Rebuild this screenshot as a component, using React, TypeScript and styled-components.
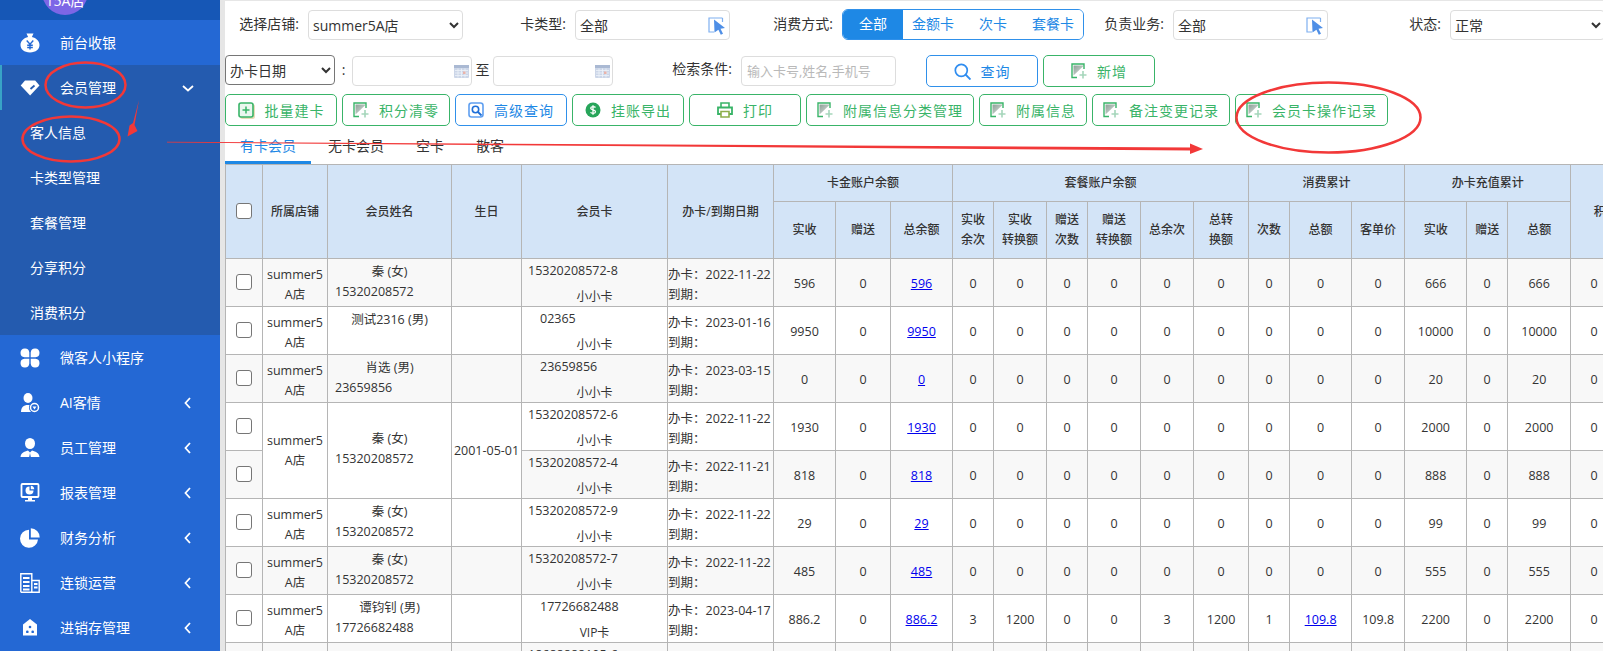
import React from "react";
import styled, { createGlobalStyle } from "styled-components";

const FONT = `"Open Sans", "Noto Sans CJK SC", sans-serif`;
const GREEN = "#39b468";
const BLUE = "#1e88e5";

const Global = createGlobalStyle`
  html, body { margin: 0; padding: 0; width: 1603px; height: 651px; overflow: hidden; background: #fff; }
  body { font-family: ${FONT}; font-size: 14px; color: #333; }
  * { box-sizing: border-box; }
`;

const Page = styled.div`
  position: relative;
  display: flex;
  width: 1603px;
  height: 651px;
  overflow: hidden;
`;

/* ---------- sidebar ---------- */
const Sidebar = styled.aside`
  flex: 0 0 220px;
  width: 220px;
  height: 651px;
  background: #2468d4;
  overflow: hidden;
  color: #fff;
`;
const SideTop = styled.div`
  height: 20px;
  background: #1657b6;
  display: flex;
  align-items: flex-end;
  padding-left: 42px;
  overflow: hidden;
`;
const Avatar = styled.div`
  flex: 0 0 46px;
  height: 46px;
  margin-bottom: 5px;
  border-radius: 50%;
  background: #7d66e6;
  display: flex;
  align-items: flex-end;
  justify-content: center;
  padding-bottom: 5px;
  font-size: 14px;
  line-height: 18px;
`;
const TopName = styled.span`
  margin: 0 0 18px 62px;
  font-size: 14px;
  line-height: 14px;
  height: 14px;
`;
const NavGroup = styled.div`
  background: #245baf;
`;
const NavRow = styled.div<{ $open?: boolean }>`
  height: 45px;
  display: flex;
  align-items: center;
  padding-left: ${(p) => (p.$open ? 18 : 20)}px;
  border-left: ${(p) => (p.$open ? "2px solid #38a3c6" : "none")};
`;
const NavIcon = styled.span`
  flex: 0 0 20px;
  width: 20px;
  height: 20px;
  display: block;
  svg { display: block; }
`;
const NavLabel = styled.span`
  margin-left: 20px;
  flex: 0 0 122px;
  padding-bottom: 2px;
  white-space: nowrap;
`;
const NavChevron = styled.span`
  display: block;
  width: 12px;
  height: 12px;
  svg { display: block; }
`;
const SubRow = styled.div`
  height: 45px;
  padding-left: 30px;
  line-height: 45px;
  white-space: nowrap;
`;

/* ---------- main ---------- */
const Main = styled.main`
  flex: 1 1 auto;
  min-width: 0;
  background: #e6e6e6;
  padding: 1px 0 0 5px;
  overflow: hidden;
`;
const Panel = styled.div`
  background: #fff;
  width: 1378px;
  height: 650px;
  overflow: hidden;
`;
const Row = styled.div<{ $top: number }>`
  display: flex;
  align-items: flex-start;
  margin-top: ${(p) => p.$top}px;
  height: 32px;
  white-space: nowrap;
`;
const Label = styled.label<{ $w: number }>`
  flex: 0 0 ${(p) => p.$w}px;
  width: ${(p) => p.$w}px;
  padding-right: 9px;
  text-align: right;
  height: 30px;
  line-height: 28px;
  color: #333;
`;
const Select = styled.select<{ $w: number; $dark?: boolean }>`
  flex: 0 0 ${(p) => p.$w}px;
  width: ${(p) => p.$w}px;
  height: 30px;
  border: 1px solid ${(p) => (p.$dark ? "#767676" : "#ddd")};
  border-radius: 4px;
  background: #fff;
  font: 14px ${FONT};
  color: #333;
  padding: 0;
  outline: none;
`;
const PickBox = styled.div`
  flex: 0 0 155px;
  width: 155px;
  height: 30px;
  border: 1px solid #ddd;
  border-radius: 4px;
  display: flex;
  align-items: center;
  justify-content: space-between;
  padding: 0 2px 0 4px;
  color: #333;
`;
const Seg = styled.div`
  flex: 0 0 242px;
  height: 31px;
  margin-top: -1px;
  display: flex;
  border: 1px solid #2f90ea;
  border-radius: 6px;
  overflow: hidden;
`;
const SegItem = styled.div<{ $on?: boolean }>`
  flex: 0 0 60px;
  text-align: center;
  line-height: 28px;
  color: ${(p) => (p.$on ? "#fff" : BLUE)};
  background: ${(p) => (p.$on ? BLUE : "#fff")};
`;
const Joiner = styled.span<{ $w: number }>`
  flex: 0 0 ${(p) => p.$w}px;
  text-align: center;
  line-height: 28px;
  height: 30px;
  margin-top: 1px;
`;
const DateBox = styled.div`
  flex: 0 0 120px;
  height: 30px;
  margin-top: 1px;
  border: 1px solid #ddd;
  border-radius: 4px;
  display: flex;
  align-items: center;
  justify-content: flex-end;
  padding-right: 2px;
`;
const SearchInput = styled.input`
  flex: 0 0 155px;
  width: 155px;
  height: 30px;
  margin-top: 1px;
  border: 1px solid #ddd;
  border-radius: 4px;
  padding: 0 5px;
  font: 13px ${FONT};
  outline: none;
  &::placeholder { color: #b9b9b9; }
`;
const Btn = styled.button<{ $w: number; $blue?: boolean; $ml?: number }>`
  flex: 0 0 ${(p) => p.$w}px;
  width: ${(p) => p.$w}px;
  height: 32px;
  margin-left: ${(p) => p.$ml ?? 0}px;
  display: flex;
  align-items: center;
  justify-content: center;
  gap: 10px;
  padding: 0;
  background: #fff;
  border: 1px solid ${(p) => (p.$blue ? "#2f90ea" : GREEN)};
  border-radius: 5px;
  color: ${(p) => (p.$blue ? BLUE : GREEN)};
  font: 14px ${FONT};
  letter-spacing: 1px;
  svg { display: block; flex: none; }
`;
const BtnRow = styled.div`
  display: flex;
  gap: 5px;
  margin-top: 7px;
  height: 32px;
`;
const Tabs = styled.div`
  display: flex;
  gap: 2px;
  margin-top: 5px;
  height: 33px;
`;
const Tab = styled.div<{ $on?: boolean }>`
  height: 33px;
  padding: 0 15px;
  line-height: 30px;
  border-bottom: 3px solid ${(p) => (p.$on ? BLUE : "transparent")};
  color: ${(p) => (p.$on ? BLUE : "#333")};
  white-space: nowrap;
`;

/* ---------- table ---------- */
const Table = styled.table`
  border-collapse: collapse;
  table-layout: fixed;
  width: 1439px;
  font-size: 12.5px;
  line-height: 20px;
  color: #333;
  td, th { border: 1px solid #b5b5b5; padding: 0; text-align: center; overflow: hidden; }
  th { background: #d3e4f7; font-weight: 500; font-size: 12px; color: #333; }
  tbody tr:nth-child(odd) td { background: #f8f8f8; }
  tbody tr:nth-child(even) td { background: #fff; }
  tbody td.span { background: #fff; }
`;
const HeadOne = styled.tr`
  height: 37px;
`;
const HeadTwo = styled.tr`
  height: 57px;
`;
const BodyRow = styled.tr`
  height: 48px;
`;
const Check = styled.input`
  appearance: none;
  display: block;
  width: 16px;
  height: 16px;
  margin: 0 auto 2px;
  background: #fff;
  border: 1px solid #767676;
  border-radius: 3px;
`;
const TopCell = styled.td`
  vertical-align: top;
`;
const StoreText = styled.div<{ $top: number }>`
  padding-top: ${(p) => p.$top}px;
  white-space: nowrap;
`;
const NameLine = styled.div`
  height: 20px;
  white-space: nowrap;
`;
const Phone = styled.div`
  height: 20px;
  padding-left: 7px;
  text-align: left;
`;
const NameBox = styled.div<{ $top?: number; $bottom?: number }>`
  padding-top: ${(p) => p.$top ?? 0}px;
  padding-bottom: ${(p) => p.$bottom ?? 0}px;
`;
const CardNo = styled.div<{ $pad: number }>`
  padding: 2px 0 0 ${(p) => p.$pad}px;
  text-align: left;
  height: 22px;
  white-space: nowrap;
`;
const CardKind = styled.div`
  margin-top: 8px;
  height: 16px;
  line-height: 16px;
  font-size: 12px;
`;
const DateText = styled.div`
  padding: 6px 0 0 0;
  text-align: left;
  white-space: nowrap;
`;
const Num = styled.div`
  padding-top: 2px;
`;
const Link = styled.a`
  color: #0000ee;
  text-decoration: underline;
  cursor: pointer;
`;
const Overlay = styled.svg`
  position: absolute;
  left: 0;
  top: 0;
  pointer-events: none;
`;

/* ---------- icons ---------- */
const W = { fill: "#fff" };
const BG = "#2468d4";

const BagIcon = () => (
  <svg width="20" height="20" viewBox="0 0 20 20">
    <path {...W} d="M6.5 0.5h7l-1.6 3.6c4.4 1 7.6 4 7.6 8 0 4.4-3.6 7.4-9.500 7.400S.5 16.500.5 12.100c0-4 3.200-7 7.600-8z" />
    <path d="M6.700 7.500L10 11.200l3.300-3.700M10 11.200v5.300M7.200 12.200h5.600M7.200 14.500h5.600" stroke={BG} strokeWidth="1.400" fill="none" />
  </svg>
);
const DiamondIcon = () => (
  <svg width="20" height="20" viewBox="0 0 20 20">
    <path {...W} d="M5 2.500h10.200l4.300 5-9.400 10L.7 7.500z" />
    <path d="M10.500 11l4-3.500" stroke="#245baf" strokeWidth="1.800" />
  </svg>
);
const CloverIcon = () => (
  <svg width="20" height="20" viewBox="0 0 20 20">
    <path {...W} d="M9.300 9.300H4.500a4.400 4.400 0 1 1 4.800-4.800z" />
    <path {...W} d="M10.700 9.300h4.800a4.400 4.400 0 1 0-4.800-4.800z" />
    <path {...W} d="M9.300 10.700H4.500a4.400 4.400 0 1 0 4.800 4.800z" />
    <path {...W} d="M10.700 10.700h4.800a4.400 4.400 0 1 1-4.800 4.800z" />
  </svg>
);
const AiIcon = () => (
  <svg width="20" height="20" viewBox="0 0 20 20">
    <ellipse {...W} cx="8" cy="5" rx="4.500" ry="5" />
    <path {...W} d="M1 19c0-4.500 2.500-7 7-7s7 2.500 7 7z" />
    <circle cx="14.500" cy="14.500" r="5.500" fill={BG} />
    <circle cx="14.500" cy="14.500" r="4" fill="none" stroke="#fff" strokeWidth="1.500" />
    <path {...W} d="M12.500 13.500h4l-2 3z" />
  </svg>
);
const StaffIcon = () => (
  <svg width="20" height="20" viewBox="0 0 20 20">
    <ellipse {...W} cx="10" cy="5.500" rx="5" ry="5.500" />
    <path {...W} d="M.5 19c.3-3.600 3.500-5.500 7.500-6.500l2 2 2-2c4 1 7.200 2.900 7.500 6.500z" />
    <path d="M10 15l-.8 4h1.600z" fill={BG} />
  </svg>
);
const MonitorIcon = () => (
  <svg width="20" height="20" viewBox="0 0 20 20">
    <rect x="1.500" y="1" width="17" height="13" rx="1" fill="none" stroke="#fff" strokeWidth="1.800" />
    <path {...W} d="M9.500 3.500v4h4a4 4 0 1 1-4-4z" />
    <path {...W} d="M10.800 2.800a4 4 0 0 1 3.500 3.500h-3.500zM8 15h4v2h3v1.500H5V17h3z" />
  </svg>
);
const PieIcon = () => (
  <svg width="20" height="20" viewBox="0 0 20 20">
    <path {...W} d="M9 1.800v9.700h9A9 9 0 1 1 9 1.800z" />
    <path {...W} d="M10.800.300A9 9 0 0 1 19.700 9.500h-8.900z" />
  </svg>
);
const BuildingIcon = () => (
  <svg width="20" height="20" viewBox="0 0 20 20">
    <path d="M.8 19.300V.8h11v18.500M11.800 7.500h7.400v11.800H.8" fill="none" stroke="#fff" strokeWidth="1.400" />
    <path d="M3 5h6.500M3 9h6.500M3 13h6.500M3 16.500h6.500M14 11h3.500M14 14.500h3.500" stroke="#fff" strokeWidth="2.200" />
  </svg>
);
const HouseIcon = () => (
  <svg width="20" height="20" viewBox="0 0 20 20">
    <path {...W} d="M10 1L3 6.500 3 17.500h14V6.500z" />
    <circle cx="10" cy="9" r="1.300" fill={BG} />
    <rect x="6" y="12.500" width="2.600" height="2.600" rx="1.200" fill={BG} />
    <rect x="11.400" y="12.500" width="2.600" height="2.600" rx="1.200" fill={BG} />
  </svg>
);
const ChevDown = () => (
  <svg width="12" height="12" viewBox="0 0 12 12">
    <path d="M1 4l5 4.500L11 4" fill="none" stroke="#fff" strokeWidth="1.800" />
  </svg>
);
const ChevLeft = () => (
  <svg width="12" height="12" viewBox="0 0 12 12">
    <path d="M8 1L3.500 6 8 11" fill="none" stroke="#fff" strokeWidth="1.800" />
  </svg>
);
const CursorIcon = () => (
  <svg width="20" height="20" viewBox="0 0 20 20">
    <path d="M15.500 3H2v14h5" fill="none" stroke="#7fb0f0" strokeWidth="1.200" />
    <path d="M15.500 3v4" fill="none" stroke="#7fb0f0" strokeWidth="1.200" />
    <path d="M7 4.500l11 8.500-4.500.8 2.500 5-2.200 1-2.400-5-3.900 2.700z" fill="#4f8fe6" />
  </svg>
);
const CalendarIcon = () => (
  <svg width="15" height="13" viewBox="0 0 15 13">
    <rect x="0" y="0" width="15" height="13" rx="1" fill="#ccd6e8" />
    <rect x="0" y="0" width="15" height="3" fill="#aab9d3" />
    <path d="M1 5.500h13M1 8h13M1 10.500h13M4 3.500v9M7.500 3.500v9M11 3.500v9" stroke="#eef2f9" strokeWidth=".8" />
    <rect x="9" y="6.500" width="2.500" height="2.500" fill="#eab3aa" />
  </svg>
);
const DocPlusIcon = () => (
  <svg width="16" height="16" viewBox="0 0 16 16">
    <defs>
      <linearGradient id="dp" x1="0" y1="0" x2="1" y2="1">
        <stop offset="0" stopColor="#8f9f98" />
        <stop offset="1" stopColor="#dfe6e2" />
      </linearGradient>
    </defs>
    <path d="M2.500 2.500h10.500L2.500 12.500z" fill="url(#dp)" />
    <path d="M6 14.500H1V1h12v5" fill="none" stroke={GREEN} strokeWidth="1.400" />
    <path d="M12 8v7.500M8.500 12h7" stroke="#a5d6bb" strokeWidth="1.600" />
  </svg>
);
const BatchIcon = () => (
  <svg width="17" height="17" viewBox="0 0 17 17">
    <rect x="2" y="2" width="15" height="15" rx="2.500" fill="#e8dcb8" />
    <rect x="1" y="1" width="14" height="14" rx="2" fill="#eaf7ef" stroke={GREEN} strokeWidth="1.600" />
    <path d="M8 4.500v7M4.500 8h7" stroke={GREEN} strokeWidth="1.500" />
  </svg>
);
const QueryBoxIcon = () => (
  <svg width="16" height="16" viewBox="0 0 16 16">
    <rect x="1" y="1" width="14" height="14" rx="2.500" fill="#fff" stroke="#5f9ff0" strokeWidth="1.600" />
    <circle cx="7.500" cy="7.500" r="3.200" fill="none" stroke="#1f6fd8" strokeWidth="1.600" />
    <path d="M10 10l3.500 3.500" stroke="#1f6fd8" strokeWidth="1.800" />
  </svg>
);
const DollarIcon = () => (
  <svg width="16" height="16" viewBox="0 0 16 16">
    <circle cx="8" cy="8" r="7.500" fill="#27a55a" />
    <path d="M10.500 5.500C9.500 4.300 5.700 4.300 5.700 6.300 5.700 8.500 10.500 7.400 10.500 9.700c0 2-3.900 2-5 .7M8 3.200v9.600" fill="none" stroke="#fff" strokeWidth="1.300" />
  </svg>
);
const PrinterIcon = () => (
  <svg width="16" height="16" viewBox="0 0 16 16">
    <path d="M4 5V1h8v4" fill="none" stroke={GREEN} strokeWidth="1.600" />
    <path d="M4 12H1V5.500h14V12h-3" fill="none" stroke={GREEN} strokeWidth="1.800" />
    <path d="M4 9.500h8V15H4z" fill="#fff" stroke="#8fae4a" strokeWidth="1.600" />
  </svg>
);
const SearchIcon = () => (
  <svg width="17" height="17" viewBox="0 0 17 17">
    <circle cx="7.300" cy="7.300" r="6" fill="none" stroke="#2f8df0" strokeWidth="1.700" />
    <path d="M11.500 11.500l5 5" stroke="#2f8df0" strokeWidth="1.900" />
  </svg>
);

/* ---------- data ---------- */
const navBelow = [
  { t: "微客人小程序", i: <CloverIcon />, chev: false },
  { t: "AI客情", i: <AiIcon />, chev: true },
  { t: "员工管理", i: <StaffIcon />, chev: true },
  { t: "报表管理", i: <MonitorIcon />, chev: true },
  { t: "财务分析", i: <PieIcon />, chev: true },
  { t: "连锁运营", i: <BuildingIcon />, chev: true },
  { t: "进销存管理", i: <HouseIcon />, chev: true },
];
const subs = ["客人信息", "卡类型管理", "套餐管理", "分享积分", "消费积分"];
const colW = [37, 65, 124, 70, 146, 106, 62, 55, 62, 41, 53, 41, 53, 53, 55, 41, 62, 53, 62, 41, 63, 47, 47];

type V = string | number;
type R = {
  name: string; gender: string; phone: string; birth?: string; card: string; pad: number; kind: string; date: string;
  vals: V[]; span?: boolean; skipShared?: boolean; tail?: boolean;
};
const zero6 = [0, 0, 0, 0, 0, 0];
const mk = (a: V, c: V): V[] => [a, 0, a, ...zero6, 0, 0, 0, c, 0, c, 0, 0];
const rows: R[] = [
  { name: "秦", gender: "女", phone: "15320208572", card: "15320208572-8", pad: 6, kind: "小小卡", date: "2022-11-22", vals: mk(596, 666) },
  { name: "测试2316", gender: "男", phone: "", card: "02365", pad: 18, kind: "小小卡", date: "2023-01-16", vals: mk(9950, 10000) },
  { name: "肖选", gender: "男", phone: "23659856", card: "23659856", pad: 18, kind: "小小卡", date: "2023-03-15", vals: mk(0, 20) },
  { name: "秦", gender: "女", phone: "15320208572", birth: "2001-05-01", span: true, card: "15320208572-6", pad: 6, kind: "小小卡", date: "2022-11-22", vals: mk(1930, 2000) },
  { name: "秦", gender: "女", phone: "15320208572", skipShared: true, card: "15320208572-4", pad: 6, kind: "小小卡", date: "2022-11-21", vals: mk(818, 888) },
  { name: "秦", gender: "女", phone: "15320208572", card: "15320208572-9", pad: 6, kind: "小小卡", date: "2022-11-22", vals: mk(29, 99) },
  { name: "秦", gender: "女", phone: "15320208572", card: "15320208572-7", pad: 6, kind: "小小卡", date: "2022-11-22", vals: mk(485, 555) },
  { name: "谭钧钊", gender: "男", phone: "17726682488", card: "17726682488", pad: 18, kind: "VIP卡", date: "2023-04-17",
    vals: ["886.2", 0, "886.2", 3, 1200, 0, 0, 3, 1200, 1, "109.8", "109.8", 2200, 0, 2200, 0, 0] },
  { name: "", gender: "", phone: "", card: "18688888105-6", pad: 6, kind: "小小卡", date: "", tail: true, vals: mk("", "") },
];
const isLink = (i: number, v: V) => v !== "" && (i === 2 || (i === 10 && v !== 0));

const heads2 = [
  ["实收"], ["赠送"], ["总余额"],
  ["实收", "余次"], ["实收", "转换额"], ["赠送", "次数"], ["赠送", "转换额"], ["总余次"], ["总转", "换额"],
  ["次数"], ["总额"], ["客单价"], ["实收"], ["赠送"], ["总额"],
];
const actions: { t: string; w: number; i: React.ReactNode; blue?: boolean }[] = [
  { t: "批量建卡", w: 112, i: <BatchIcon /> },
  { t: "积分清零", w: 108, i: <DocPlusIcon /> },
  { t: "高级查询", w: 112, i: <QueryBoxIcon />, blue: true },
  { t: "挂账导出", w: 112, i: <DollarIcon /> },
  { t: "打印", w: 112, i: <PrinterIcon /> },
  { t: "附属信息分类管理", w: 168, i: <DocPlusIcon /> },
  { t: "附属信息", w: 108, i: <DocPlusIcon /> },
  { t: "备注变更记录", w: 138, i: <DocPlusIcon /> },
  { t: "会员卡操作记录", w: 153, i: <DocPlusIcon /> },
];

const Store = ({ top }: { top: number }) => (
  <StoreText $top={top}>summer5<br />A店</StoreText>
);

export default function App() {
  return (
    <Page>
      <Global />
      <Sidebar>
        <SideTop>
          <Avatar>15A店</Avatar>
          <TopName>13</TopName>
        </SideTop>
        <NavRow>
          <NavIcon><BagIcon /></NavIcon>
          <NavLabel>前台收银</NavLabel>
        </NavRow>
        <NavGroup>
          <NavRow $open>
            <NavIcon><DiamondIcon /></NavIcon>
            <NavLabel>会员管理</NavLabel>
            <NavChevron><ChevDown /></NavChevron>
          </NavRow>
          {subs.map((s) => <SubRow key={s}>{s}</SubRow>)}
        </NavGroup>
        {navBelow.map((n) => (
          <NavRow key={n.t}>
            <NavIcon>{n.i}</NavIcon>
            <NavLabel>{n.t}</NavLabel>
            {n.chev && <NavChevron><ChevLeft /></NavChevron>}
          </NavRow>
        ))}
      </Sidebar>

      <Main>
        <Panel>
          <Row $top={9}>
            <Label $w={83}>选择店铺:</Label>
            <Select $w={155} defaultValue="a"><option value="a">summer5A店</option></Select>
            <Label $w={112}>卡类型:</Label>
            <PickBox>全部<CursorIcon /></PickBox>
            <Label $w={112}>消费方式:</Label>
            <Seg>
              <SegItem $on>全部</SegItem>
              <SegItem>金额卡</SegItem>
              <SegItem>次卡</SegItem>
              <SegItem>套餐卡</SegItem>
            </Seg>
            <Label $w={89}>负责业务:</Label>
            <PickBox>全部<CursorIcon /></PickBox>
            <Label $w={122}>状态:</Label>
            <Select $w={155} defaultValue="n"><option value="n">正常</option></Select>
          </Row>
          <Row $top={13}>
            <Select $w={110} $dark defaultValue="d"><option value="d">办卡日期</option></Select>
            <Joiner $w={17}>:</Joiner>
            <DateBox><CalendarIcon /></DateBox>
            <Joiner $w={21}>至</Joiner>
            <DateBox><CalendarIcon /></DateBox>
            <Label $w={128}>检索条件:</Label>
            <SearchInput placeholder="输入卡号,姓名,手机号" />
            <Btn $w={112} $ml={30} $blue><SearchIcon />查询</Btn>
            <Btn $w={112} $ml={5}><DocPlusIcon />新增</Btn>
          </Row>
          <BtnRow>
            {actions.map((a) => (
              <Btn key={a.t} $w={a.w} $blue={a.blue}>{a.i}{a.t}</Btn>
            ))}
          </BtnRow>
          <Tabs>
            <Tab $on>有卡会员</Tab>
            <Tab>无卡会员</Tab>
            <Tab>空卡</Tab>
            <Tab>散客</Tab>
          </Tabs>
          <Table>
            <colgroup>
              {colW.map((w, i) => <col key={i} style={{ width: w }} />)}
            </colgroup>
            <thead>
              <HeadOne>
                <th rowSpan={2}><Check type="checkbox" /></th>
                <th rowSpan={2}>所属店铺</th>
                <th rowSpan={2}>会员姓名</th>
                <th rowSpan={2}>生日</th>
                <th rowSpan={2}>会员卡</th>
                <th rowSpan={2}>办卡/到期日期</th>
                <th colSpan={3}>卡金账户余额</th>
                <th colSpan={6}>套餐账户余额</th>
                <th colSpan={3}>消费累计</th>
                <th colSpan={3}>办卡充值累计</th>
                <th rowSpan={2} colSpan={2}>积分余额</th>
              </HeadOne>
              <HeadTwo>
                {heads2.map((h, i) => (
                  <th key={i}>{h.map((l, j) => <div key={j}>{l}</div>)}</th>
                ))}
              </HeadTwo>
            </thead>
            <tbody>
              {rows.map((r, idx) => (
                <BodyRow key={idx}>
                  <td>{!r.tail && <Check type="checkbox" />}</td>
                  {r.span && (
                    <>
                      <td rowSpan={2} className="span"><Store top={0} /></td>
                      <td rowSpan={2} className="span">
                        <NameBox $bottom={4}>
                          <NameLine>{r.name} ({r.gender})</NameLine>
                          <Phone>{r.phone}</Phone>
                        </NameBox>
                      </td>
                      <td rowSpan={2} className="span">{r.birth}</td>
                    </>
                  )}
                  {!r.span && !r.skipShared && (
                    <>
                      <TopCell>{!r.tail && <Store top={6} />}</TopCell>
                      <TopCell>
                        {!r.tail && (
                          <NameBox $top={3}>
                            <NameLine>{r.name} ({r.gender})</NameLine>
                            <Phone>{r.phone}</Phone>
                          </NameBox>
                        )}
                      </TopCell>
                      <td />
                    </>
                  )}
                  <TopCell>
                    <CardNo $pad={r.pad}>{r.card}</CardNo>
                    <CardKind>{r.kind}</CardKind>
                  </TopCell>
                  <TopCell>
                    {!r.tail && <DateText>办卡：{r.date}<br />到期：</DateText>}
                  </TopCell>
                  {r.vals.map((v, i) => (
                    <td key={i}>
                      <Num>{isLink(i, v) ? <Link>{v}</Link> : v}</Num>
                    </td>
                  ))}
                </BodyRow>
              ))}
            </tbody>
          </Table>
        </Panel>
      </Main>

      <Overlay width="1603" height="651" viewBox="0 0 1603 651">
        <g fill="none" stroke="#f23838" strokeWidth="2.500">
          <ellipse cx="85.500" cy="85" rx="40" ry="22.500" />
          <ellipse cx="71" cy="139" rx="48.500" ry="22.500" />
          <ellipse cx="1328.500" cy="117.500" rx="92" ry="35" />
        </g>
        <g fill="#f23838">
          <polygon points="139,100 133,123 129.500,125.500 127.500,136.500 137.500,131 134.500,125" />
          <polygon points="167,141.800 1192,147.500 1192,150.500 167,142.600" />
          <polygon points="1190,143.500 1203,149 1190,154" />
        </g>
      </Overlay>
    </Page>
  );
}
